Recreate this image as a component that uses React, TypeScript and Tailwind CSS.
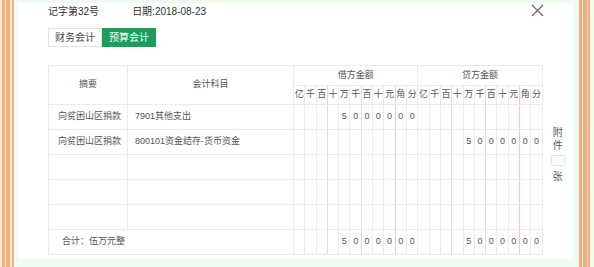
import React from "react";

const digitLabels = ["亿", "千", "百", "十", "万", "千", "百", "十", "元", "角", "分"];
const amount = ["", "", "", "", "5", "0", "0", "0", "0", "0", "0"];
const empty = Array(11).fill("");

function lineClass(i: number) {
  if (i === 2 || i === 5) return "border-r-[#cde2f4]";
  if (i === 8) return "border-r-[#f2c8c8]";
  return "border-r-[#ebebeb]";
}

function Cells({ values }: { values: string[] }) {
  return (
    <>
      {values.map((v, i) => (
        <td
          key={i}
          className={`border-y border-l border-r border-[#ebebeb] ${lineClass(i)} p-0 text-center text-[9px] text-[#555]`}
        >
          {v}
        </td>
      ))}
    </>
  );
}

function Stripes({ side }: { side: "left" | "right" }) {
  const left = (
    <div className="flex h-full shrink-0">
      <div className="w-[2px] bg-[#fbe8cf]" />
      <div className="w-[3px] bg-[#eeae80]" />
      <div className="w-[1px] bg-[#fbe8cf]" />
      <div className="w-[4px] bg-[#eeae80]" />
      <div className="w-[2px] bg-[#fbe8cf]" />
      <div className="w-[2px] bg-[#eeae80]" />
      <div className="w-[4px] bg-[#eefcf1]" />
    </div>
  );
  const right = (
    <div className="flex h-full shrink-0">
      <div className="w-[6px] bg-[#eefcf1]" />
      <div className="w-[3px] bg-[#eeae80]" />
      <div className="w-[1px] bg-[#fbe8cf]" />
      <div className="w-[4px] bg-[#eeae80]" />
      <div className="w-[1px] bg-[#fbe8cf]" />
      <div className="w-[2px] bg-[#eeae80]" />
      <div className="w-[5px] bg-[#f3fbea]" />
    </div>
  );
  return side === "left" ? left : right;
}

export default function App() {
  const rows = [
    { summary: "向贫困山区捐款", subject: "7901其他支出", debit: amount, credit: empty },
    { summary: "向贫困山区捐款", subject: "800101资金结存-货币资金", debit: empty, credit: amount },
    { summary: "", subject: "", debit: empty, credit: empty },
    { summary: "", subject: "", debit: empty, credit: empty },
    { summary: "", subject: "", debit: empty, credit: empty },
  ];

  return (
    <div
      className="flex h-[267px] w-[594px] overflow-hidden bg-[#eefcf1]"
      style={{ fontFamily: '"Liberation Sans", "Noto Sans CJK SC", sans-serif' }}
    >
      <Stripes side="left" />
      <div className="flex flex-1 flex-col pb-[8px] pt-[3px]">
        <div className="flex flex-1 flex-col bg-white pl-[30px]">
          <div className="flex h-[17px] w-[496px] items-center justify-between text-[10px] text-[#333]">
            <div className="flex items-center gap-[33px]">
              <span>记字第32号</span>
              <span>日期:2018-08-23</span>
            </div>
            <svg width="13" height="13" viewBox="0 0 13 13" className="mb-[2px]">
              <path d="M1 1 L12 12 M12 1 L1 12" stroke="#6b6b6b" strokeWidth="1.3" fill="none" />
            </svg>
          </div>

          <div className="mt-[8px] flex text-[10px]">
            <div className="flex h-[19px] items-center border border-[#e3e3e3] px-[6px] text-[#444]">财务会计</div>
            <div className="flex h-[19px] items-center bg-[#1c9d5c] px-[7px] text-white">预算会计</div>
          </div>

          <div className="mt-[18px] flex">
            <table className="w-[494px] table-fixed border-collapse border border-[#ebebeb] text-[9px] text-[#555]">
              <colgroup>
                <col className="w-[79px]" />
                <col className="w-[166px]" />
                {Array.from({ length: 22 }).map((_, i) => (
                  <col key={i} className="w-[11.3px]" />
                ))}
              </colgroup>
              <thead>
                <tr className="h-[20px]">
                  <th rowSpan={2} className="border border-[#ebebeb] font-normal">摘要</th>
                  <th rowSpan={2} className="border border-[#ebebeb] font-normal">会计科目</th>
                  <th colSpan={11} className="border border-[#ebebeb] font-normal">借方金额</th>
                  <th colSpan={11} className="border border-[#ebebeb] font-normal">贷方金额</th>
                </tr>
                <tr className="h-[19px]">
                  {[...digitLabels, ...digitLabels].map((d, i) => (
                    <th
                      key={i}
                      className={`border border-[#ebebeb] ${lineClass(i % 11)} p-0 text-center text-[9px] font-normal`}
                    >
                      {d}
                    </th>
                  ))}
                </tr>
              </thead>
              <tbody>
                {rows.map((r, i) => (
                  <tr key={i} className="h-[25px]">
                    <td className="overflow-hidden whitespace-nowrap border border-[#ebebeb] pl-[9px] pr-0">{r.summary}</td>
                    <td className="whitespace-nowrap border border-[#ebebeb] px-[7px]">{r.subject}</td>
                    <Cells values={r.debit} />
                    <Cells values={r.credit} />
                  </tr>
                ))}
                <tr className="h-[25px]">
                  <td colSpan={2} className="border border-[#ebebeb] px-[13px]">合计：伍万元整</td>
                  <Cells values={amount} />
                  <Cells values={amount} />
                </tr>
              </tbody>
            </table>
            <div className="flex w-[30px] flex-col items-center pt-[61px] text-[10px] leading-[13px] text-[#555]">
              <span>附</span>
              <span>件</span>
              <div className="mt-[3px] h-[11px] w-[14px] border border-[#e3e3e3]" />
              <span className="mt-[4px]">张</span>
            </div>
          </div>
        </div>
      </div>
      <Stripes side="right" />
    </div>
  );
}
